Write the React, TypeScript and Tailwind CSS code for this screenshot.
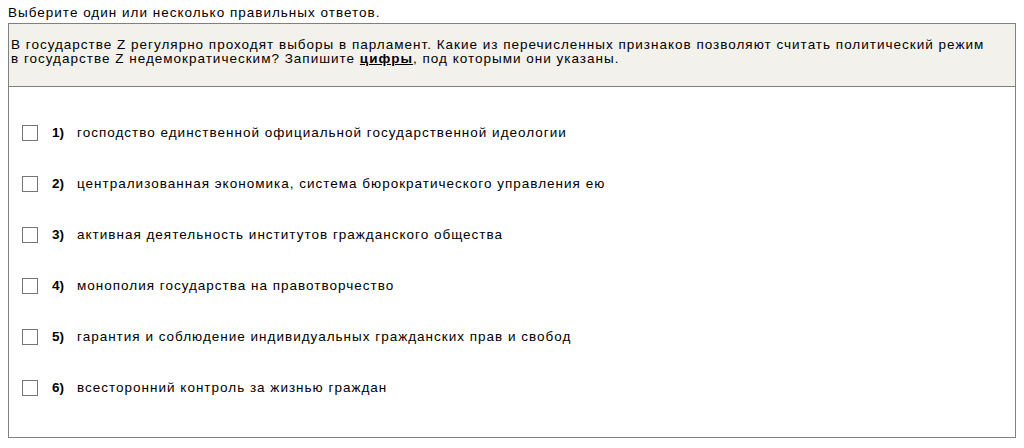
const options = [
  "господство единственной официальной государственной идеологии",
  "централизованная экономика, система бюрократического управления ею",
  "активная деятельность институтов гражданского общества",
  "монополия государства на правотворчество",
  "гарантия и соблюдение индивидуальных гражданских прав и свобод",
  "всесторонний контроль за жизнью граждан",
];

export default function App() {
  return (
    <div className="w-[1024px] h-[448px] bg-white text-black font-['Liberation_Sans',Arial,sans-serif] text-[13.5px] tracking-[1px] leading-[14px]">
      <div className="pl-[8px] pt-[6px] h-[23px]">Выберите один или несколько правильных ответов.</div>
      <div className="ml-[8px] w-[1008px] border border-[#808080]">
        <div className="bg-[#f3f1ec] pl-[2px] pt-[14px] h-[63px] border-b border-[#808080]">
          <span className="whitespace-nowrap">
            В государстве Z регулярно проходят выборы в парламент. Какие из перечисленных признаков позволяют считать политический режим
          </span>
          <br />
          в государстве Z недемократическим? Запишите <b className="underline">цифры</b>, под которыми они указаны.
        </div>
        <div className="pt-[20px] pb-[24px] flex flex-col">
          {options.map((o, i) => (
            <div key={i} className="h-[51px] flex items-center pl-[13px]">
              <div className="w-[16px] h-[16px] border border-[#767676] bg-white" />
              <span className="ml-[14px] w-[25px] font-bold tracking-normal">{i + 1})</span>
              <span>{o}</span>
            </div>
          ))}
        </div>
      </div>
    </div>
  );
}
